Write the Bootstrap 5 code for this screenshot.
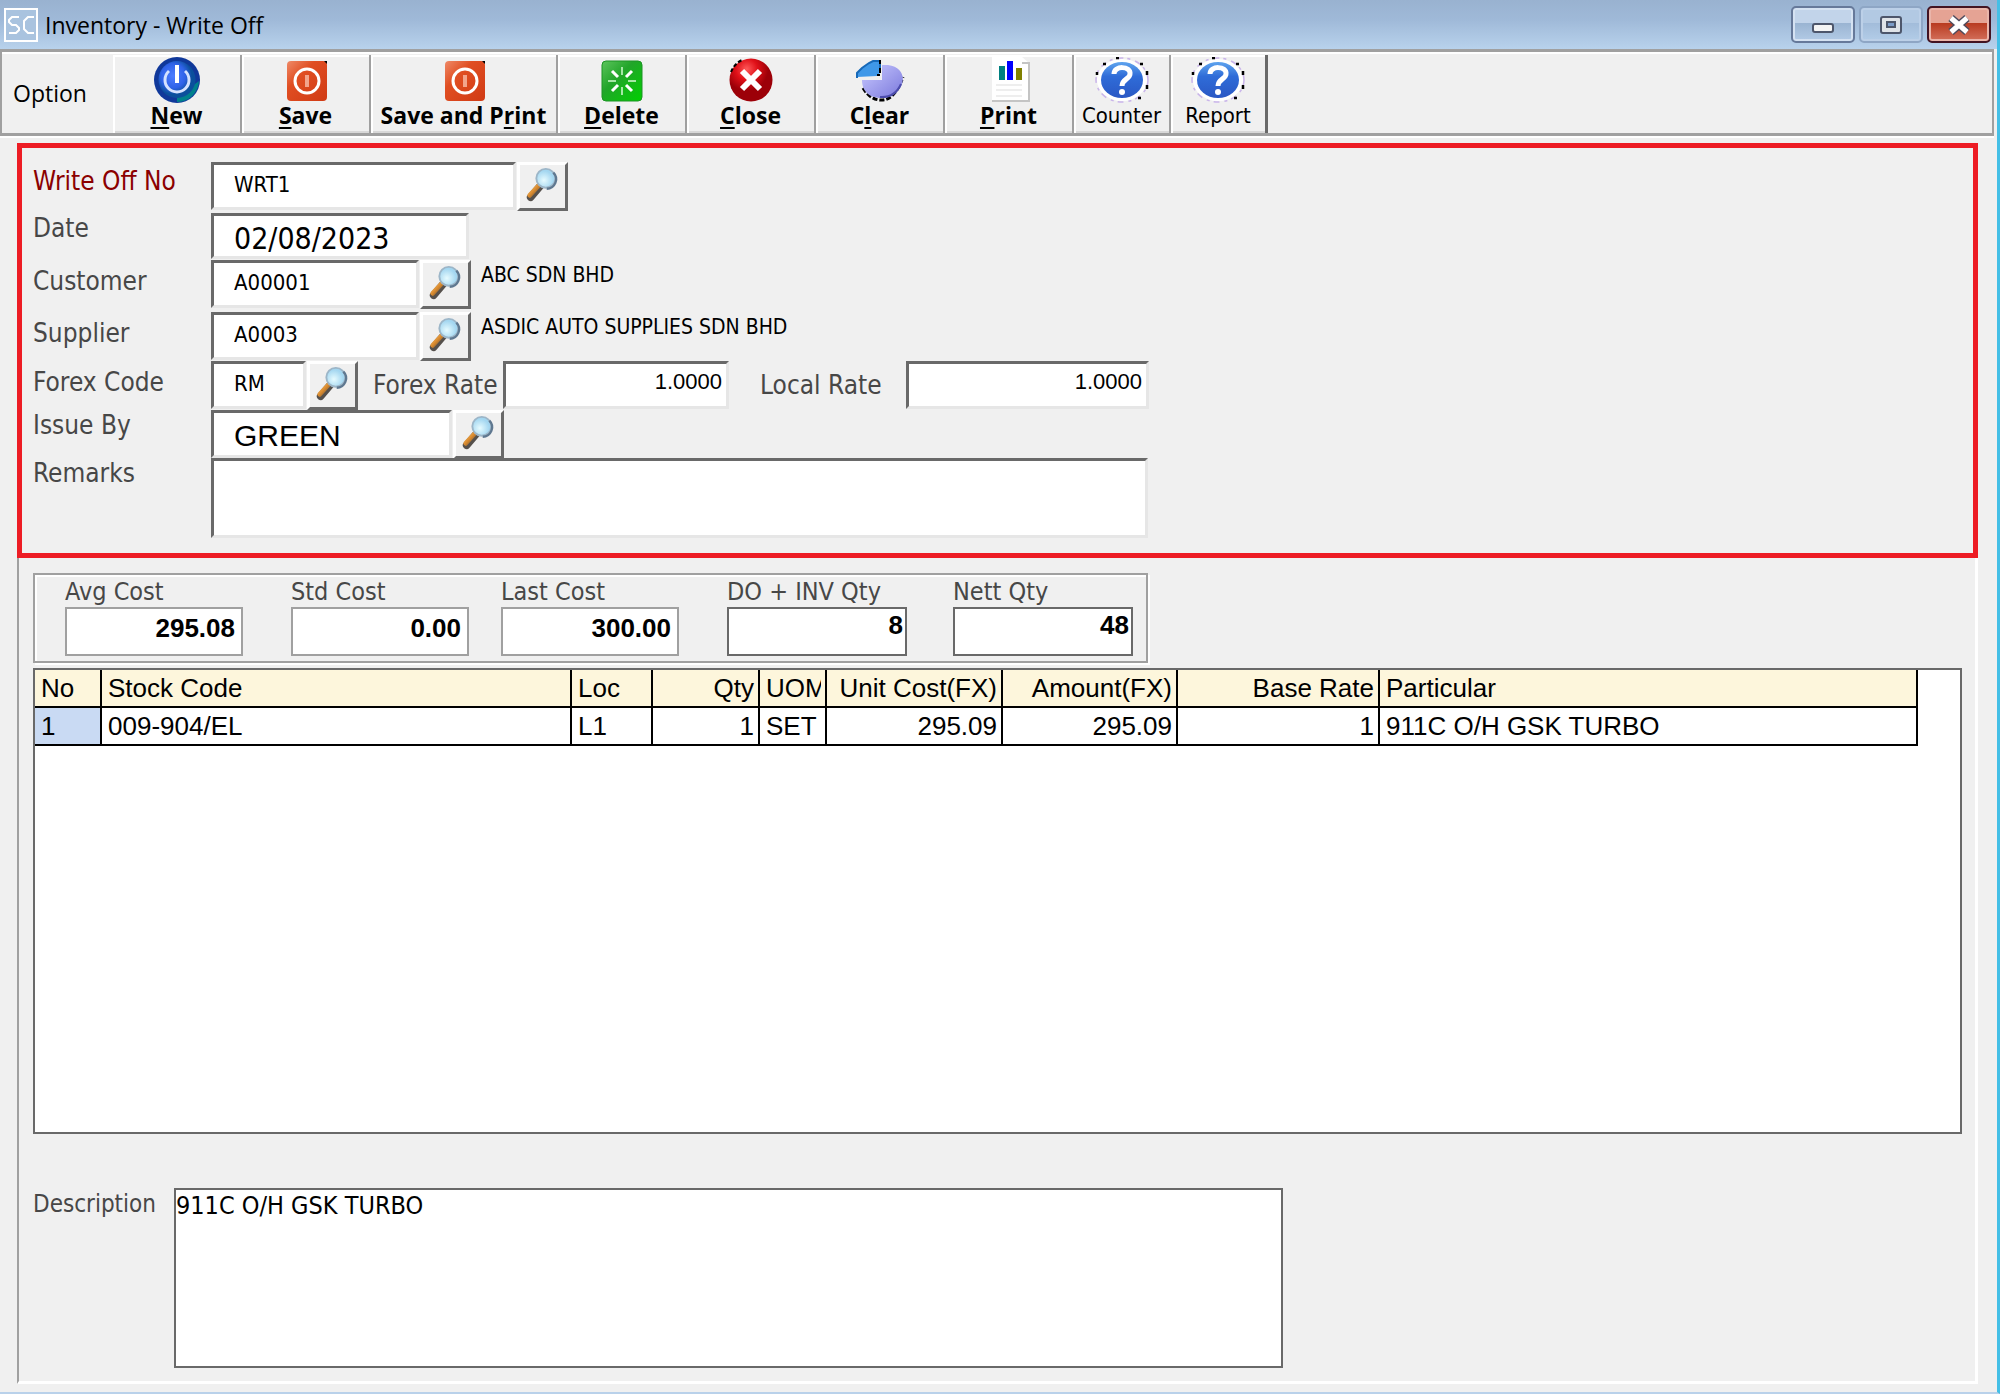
<!DOCTYPE html>
<html lang="en">
<head>
<meta charset="utf-8">
<meta name="viewport" content="width=device-width, initial-scale=1">
<title>Inventory - Write Off</title>
<link href="https://cdn.jsdelivr.net/npm/bootstrap@5.3.0/dist/css/bootstrap.min.css" rel="stylesheet">
<style>
:root { --face: #f0f0f0; --dark: #696969; --mid: #a0a0a0; }
body { font-family: "DejaVu Sans Condensed", "Noto Sans", sans-serif; font-size: 25px; line-height: 30px; color: #000; background: var(--face); }
.app-window { min-height: 100vh; border-right: 3px solid #45bfe6; border-bottom: 2px solid #b9d1ea; background: var(--face); }
.ui-font { font-family: "Open Sans", "Noto Sans", sans-serif; font-size: 23px; }

/* title bar */
.title-bar { height: 49px; padding: 0 6px 0 4px; background: linear-gradient(#99b2d0, #9fb9d8 40%, #b8d2ec); }
.title-bar h1 { font-size: 23px; font-weight: 400; line-height: 30px; margin: 0 0 0 7px; }
.app-logo { width: 34px; height: 34px; }
.win-btn { width: 64px; height: 37px; padding: 0; border: 2px solid #66799a; border-radius: 5px; box-shadow: inset 0 0 0 2px #d5e2f2; background: linear-gradient(#c2d4ea 45%, #9ab4d2 46%, #b3cbe6); display: flex; align-items: center; justify-content: center; }
.win-btn-dim { border-color: #8ea6c5; box-shadow: inset 0 0 0 2px #bcd0e8; background: linear-gradient(#b2c9e3 45%, #a2bcda 46%, #b3cde8); }
.win-btn-close { border-color: #431422; box-shadow: inset 0 0 0 2px #eab5aa; background: linear-gradient(#e5a394 45%, #b83a20 46%, #d4715c); }

/* tool bar */
.tool-bar { height: 87px; margin-right: 3px; border: 3px solid var(--mid); border-width: 3px 2px; box-shadow: inset 0 2px 0 #fff, 0 2px 0 #fff; padding: 3px 0 0 0; }
.tool-title { width: 111px; padding: 23px 0 0 11px; }
.tool-btn { width: 129px; padding: 2px 0 0; border: 0; border-right: 2px solid var(--mid); border-radius: 0; background: var(--face); box-shadow: inset 2px 2px 0 #fff, inset 0 -2px 0 #d8d8d8; font-weight: 700; line-height: 24px; color: #000; display: flex; flex-direction: column; align-items: center; white-space: nowrap; }
.tool-btn svg { width: 54px; height: 46px; flex-shrink: 0; }
.tool-btn u { text-underline-offset: 3px; text-decoration-thickness: 2px; }
.tool-btn-wide { width: 187px; }
.tool-btn-help { width: 97px; font: 400 22px/26px "DejaVu Sans Condensed", "Noto Sans", sans-serif; }
.tool-btn-last { border-right: 3px solid var(--dark); }

/* page panel */
.work-panel { margin: 7px 19px 8px 17px; border: 2px solid var(--mid); border-right: 3px solid #fff; border-bottom: 3px solid #fff; border-top: 0; }
.entry-frame { margin: 0 -3px 0 -2px; border: 5px solid #ed1c24; padding: 14px 11px 15px; }
.cap { color: #474747; white-space: nowrap; }
.entry-row > .cap { font-size: 26px; }
.entry-row > .cap:first-child { width: 178px; }
.entry-row { height: 49px; }
.row-no-key { height: 51px; } .row-date { height: 47px; } .row-cust { height: 52px; } .row-issue { height: 48px; }
.cap-low { padding-top: 6px; }
.entry-row > .cap-rate { width: 130px; margin-left: 15px; padding-top: 9px; }
.entry-row > .cap-local { width: 146px; margin-left: 31px; padding-top: 9px; }
.key-cap { color: #8b0000; }

.field { height: 48px; border: 3px solid; border-color: var(--dark) #e6e6e6 #e6e6e6 var(--dark); border-radius: 0; background: #fff; color: #000; padding: 0 4px 4px 20px; font-size: 22px; line-height: 28px; }
.field-lg { font-size: 30px; padding: 4px 4px 0 20px; line-height: 32px; }
.arial { font-family: "Liberation Sans", Arial, sans-serif; }
.w-key { width: 305px; } .w-date { width: 258px; height: 46px; } .w-code { width: 208px; } .w-cur { width: 95px; }
.w-rate { width: 226px; padding: 0 4px 6px; } .w-local { width: 243px; padding: 0 4px 6px; } .w-issue { width: 241px; }
.remarks { width: 937px; height: 80px; resize: none; }
.find-btn { width: 51px; height: 49px; margin-left: 1px; padding: 1px 2px 0 0; border: 3px solid; border-color: #fff var(--dark) var(--dark) #fff; background: var(--face); display: flex; align-items: flex-start; justify-content: center; }
.find-btn svg { width: 36px; height: 36px; }
.party { font-size: 21px; padding: 0 0 0 10px; white-space: nowrap; }

/* cost figures */
.cost-box { width: 1115px; height: 90px; margin: 15px 0 5px 14px; border: 2px solid var(--mid); box-shadow: inset 2px 2px 0 #fff, 2px 2px 0 #fff; padding: 2px 0 0 30px; }
.cost-item { width: 178px; flex-shrink: 0; }
.gap-a { margin-right: 48px; } .gap-b { margin-right: 32px; }
.cost-item .cap { display: block; }
.cost-val { width: 100%; height: 49px; border: 2px solid var(--mid); border-radius: 0; padding: 0 6px 6px; font-size: 26px; font-weight: 700; color: #000; background: #fff; text-align: right; }
.cost-wide { width: 180px; }
.cost-wide + .cost-wide { margin-left: 46px; }
.cost-val-dark { border-color: var(--dark); padding: 0 2px 13px; }

/* item grid */
.grid-box { margin: 0 13px 0 14px; border: 2px solid var(--dark); background: #fff; min-height: 466px; }
.stock-grid { width: calc(100% - 42px); table-layout: fixed; margin: 0; font-size: 26px; line-height: 34px; border-collapse: separate; border-spacing: 0; }
.stock-grid th, .stock-grid td { height: 38px; padding: 1px 4px 1px 6px; font-weight: 400; border-right: 2px solid #000; border-bottom: 2px solid #000; white-space: nowrap; }
.stock-grid th { background: #fdf6dc; }
.stock-grid .row-no { background: #c9daf3; }

.desc-row { margin: 54px 14px 13px; }
.desc-row .cap { width: 141px; padding-top: 1px; font-size: 24px; }
.desc-text { width: 1109px; height: 180px; border: 2px solid var(--dark); border-radius: 0; padding: 0; font-size: 25px; line-height: 32px; color: #000; background: #fff; resize: none; }
</style>
<script src="https://cdn.jsdelivr.net/npm/bootstrap@5.3.0/dist/js/bootstrap.bundle.min.js"></script>
</head>
<body>
<svg width="0" height="0" class="position-absolute" aria-hidden="true">
  <defs>
    <linearGradient id="gHandle" x1="0" y1="0" x2="1" y2="1"><stop offset="0" stop-color="#ffc56e"/><stop offset=".5" stop-color="#d98a2e"/><stop offset="1" stop-color="#4b4640"/></linearGradient>
    <radialGradient id="gLens" cx=".4" cy=".6"><stop offset="0" stop-color="#e6fbff"/><stop offset="1" stop-color="#a3d6f0"/></radialGradient>
    <radialGradient id="gBlue" cx=".4" cy=".4"><stop offset="0" stop-color="#4d7dff"/><stop offset=".65" stop-color="#2f62e8"/><stop offset="1" stop-color="#0b4f9c"/></radialGradient>
    <linearGradient id="gRedSq" x1="0" y1="0" x2="1" y2="1"><stop offset="0" stop-color="#ef8a68"/><stop offset=".35" stop-color="#e04e22"/><stop offset="1" stop-color="#d03a14"/></linearGradient>
    <linearGradient id="gGreen" x1="0" y1="0" x2="1" y2="1"><stop offset="0" stop-color="#5cc45c"/><stop offset=".4" stop-color="#22a52a"/><stop offset="1" stop-color="#00d000"/></linearGradient>
    <radialGradient id="gRed" cx=".4" cy=".25"><stop offset="0" stop-color="#ff5a5a"/><stop offset=".5" stop-color="#e01018"/><stop offset="1" stop-color="#9c0008"/></radialGradient>
    <linearGradient id="gPie" x1="0" y1="0" x2="1" y2="1"><stop offset="0" stop-color="#c9c9ff"/><stop offset="1" stop-color="#7a78dc"/></linearGradient>
    <linearGradient id="gHelp" x1="0" y1="0" x2="0" y2="1"><stop offset="0" stop-color="#5fa4ee"/><stop offset=".4" stop-color="#2f6cd8"/><stop offset="1" stop-color="#2a58c4"/></linearGradient>
    <symbol id="find" viewBox="0 0 38 38">
      <path d="M18 20 L7 33" stroke="#55504c" stroke-width="8" stroke-linecap="round"/>
      <path d="M17 19 L6 31" stroke="url(#gHandle)" stroke-width="5" stroke-linecap="round"/>
      <circle cx="23" cy="13" r="10" fill="url(#gLens)" stroke="#9db6c8" stroke-width="2"/>
      <path d="M31 7 A10 10 0 0 1 24 24" fill="none" stroke="#5f7890" stroke-width="2.500"/>
    </symbol>
    <symbol id="power" viewBox="0 0 54 46">
      <circle cx="27" cy="23" r="23" fill="#10389a"/><path d="M49 24 A22 22 0 0 1 27 45 L27 40 Z" fill="#00808c"/>
      <circle cx="27" cy="22.500" r="18.500" fill="url(#gBlue)"/>
      <path d="M19 14 A12 12 0 1 0 35 14" fill="none" stroke="#d5e2ff" stroke-width="3"/><path d="M27 8v18" stroke="#fff" stroke-width="4"/>
    </symbol>
    <symbol id="stop" viewBox="0 0 54 46">
      <rect x="8" y="4" width="40" height="40" rx="4" fill="url(#gRedSq)"/><path d="M45 4h3v3z" fill="#000"/>
      <circle cx="28" cy="24" r="12" fill="none" stroke="#fff" stroke-width="3"/><path d="M28 18v12" stroke="#f2a58c" stroke-width="4"/>
    </symbol>
    <symbol id="help" viewBox="0 0 54 46">
      <ellipse cx="27" cy="23" rx="25" ry="21" fill="#fff"/>
      <ellipse cx="27" cy="23" rx="26" ry="22" fill="none" stroke="#c9b4ea" stroke-width="1.500" stroke-dasharray="6 4 3 5"/>
      <path d="M21 1h3M8 7h3M2 15v3M45 7h3M52 14v4M52 28v4M43 41h3" stroke="#000" stroke-width="2.500"/>
      <ellipse cx="27" cy="23" rx="21" ry="18" fill="url(#gHelp)"/>
      <path d="M19 17 C19 8 36 9 35 17 C35 22 27 22 27 29" fill="none" stroke="#fff" stroke-width="5"/><circle cx="27" cy="35" r="3" fill="#fff"/>
    </symbol>
  </defs>
</svg>

<div class="app-window d-flex flex-column">
  <header class="title-bar ui-font d-flex align-items-center">
    <svg class="app-logo" viewBox="0 0 34 34" aria-hidden="true"><rect x="1" y="1" width="32" height="32" fill="#a9c3df" stroke="#fff" stroke-width="2"/><path d="M15 9H8L5 12v2l3 3h4l3 3v2l-3 3H5M30 9h-6l-4 4v8l4 4h6" fill="none" stroke="#fff" stroke-width="2"/></svg>
    <h1>Inventory - Write Off</h1>
    <div class="d-flex gap-1 ms-auto">
      <button type="button" class="win-btn" aria-label="Minimize"><svg width="24" height="24" viewBox="0 0 24 24"><rect x="2" y="11" width="20" height="8" rx="2" fill="#f4f4f4" stroke="#4d566b" stroke-width="2"/></svg></button>
      <button type="button" class="win-btn win-btn-dim" aria-label="Maximize"><svg width="24" height="20" viewBox="0 0 24 20"><rect x="2" y="2" width="20" height="16" rx="2" fill="#dfe3e8" stroke="#4d566b" stroke-width="2"/><rect x="8" y="7" width="8" height="5" fill="#7c9cc8" stroke="#4d566b" stroke-width="2"/></svg></button>
      <button type="button" class="win-btn win-btn-close" aria-label="Close window"><svg width="26" height="20" viewBox="0 0 26 20"><path d="M5 3l16 14M21 3L5 17" stroke="#4d4a5c" stroke-width="8"/><path d="M5 3l16 14M21 3L5 17" stroke="#fff" stroke-width="5"/></svg></button>
    </div>
  </header>

  <nav class="tool-bar ui-font d-flex" aria-label="Option">
    <div class="tool-title">Option</div>
    <button type="button" class="tool-btn"><svg><use href="#power"/></svg><span><u>N</u>ew</span></button>
    <button type="button" class="tool-btn"><svg><use href="#stop"/></svg><span><u>S</u>ave</span></button>
    <button type="button" class="tool-btn tool-btn-wide"><svg><use href="#stop"/></svg><span>Save and P<u>r</u>int</span></button>
    <button type="button" class="tool-btn"><svg viewBox="0 0 54 46"><rect x="7" y="4" width="40" height="40" rx="4" fill="url(#gGreen)" stroke="#1c9424"/><path d="M27 10v8M27 30v8M13 24h8M33 24h8" stroke="#a6e8a6" stroke-width="2"/><path d="M17 14l6 6M31 28l6 6M37 14l-6 6M23 28l-6 6" stroke="#fff" stroke-width="3"/></svg><span><u>D</u>elete</span></button>
    <button type="button" class="tool-btn"><svg viewBox="0 0 54 46"><circle cx="27" cy="23" r="21.500" fill="url(#gRed)"/><path d="M7 15A21.500 21.500 0 0 1 18 3" fill="none" stroke="#000" stroke-width="2" stroke-dasharray="4 2"/><path d="M18 14l18 18M36 14L18 32" stroke="#fff" stroke-width="6"/></svg><span><u>C</u>lose</span></button>
    <button type="button" class="tool-btn"><svg viewBox="0 0 54 46"><path d="M10 31Q18 44 30 43T50 20" fill="none" stroke="#000" stroke-width="3" stroke-dasharray="5 2"/><path d="M9 23H29V8H35C58 11 53 38 29 41C14 41 9 32 9 23Z" fill="url(#gPie)"/><path d="M48 27Q42 41 27 40" fill="none" stroke="#4c4cac" stroke-width="2"/><path d="M4 20V16L9 11L16 6L20 4H27V16L24 19Z" fill="#3f98e8"/><path d="M4 21V16L9 11L16 6L20 4H27V16" fill="none" stroke="#1769b8" stroke-width="2"/><path d="M27 3v4M27 11v5M24 18h3" stroke="#000" stroke-width="2"/></svg><span>C<u>l</u>ear</span></button>
    <button type="button" class="tool-btn"><svg viewBox="0 0 54 46"><path d="M10 0h30l7 6v38H10z" fill="#fff"/><path d="M40 6h7v38H10" fill="none" stroke="#c4c4c4" stroke-width="2"/><path d="M17 9h6v14h-6z" fill="#008080"/><path d="M25 4h6v19h-6z" fill="#00f"/><path d="M34 11h6v12h-6z" fill="#808000"/><path d="M14 28h26M14 33h26M14 39h26" stroke="#ddd"/></svg><span><u>P</u>rint</span></button>
    <button type="button" class="tool-btn tool-btn-help"><svg><use href="#help"/></svg><span>Counter</span></button>
    <button type="button" class="tool-btn tool-btn-help tool-btn-last"><svg><use href="#help"/></svg><span>Report</span></button>
  </nav>

  <main class="work-panel d-flex flex-column flex-grow-1">
    <form class="entry-frame">
      <div class="entry-row row-no-key d-flex">
        <label class="cap key-cap pt-1" for="no">Write Off No</label>
        <input id="no" class="field w-key" value="WRT1">
        <button type="button" class="find-btn" aria-label="Find write off"><svg><use href="#find"/></svg></button>
      </div>
      <div class="entry-row row-date d-flex">
        <label class="cap" for="date">Date</label>
        <input id="date" class="field field-lg w-date" value="02/08/2023">
      </div>
      <div class="entry-row row-cust d-flex">
        <label class="cap cap-low" for="cust">Customer</label>
        <input id="cust" class="field w-code" value="A00001">
        <button type="button" class="find-btn" aria-label="Find customer"><svg><use href="#find"/></svg></button>
        <span class="party">ABC SDN BHD</span>
      </div>
      <div class="entry-row d-flex">
        <label class="cap cap-low" for="supp">Supplier</label>
        <input id="supp" class="field w-code" value="A0003">
        <button type="button" class="find-btn" aria-label="Find supplier"><svg><use href="#find"/></svg></button>
        <span class="party">ASDIC AUTO SUPPLIES SDN BHD</span>
      </div>
      <div class="entry-row d-flex">
        <label class="cap cap-low" for="cur">Forex Code</label>
        <input id="cur" class="field w-cur" value="RM">
        <button type="button" class="find-btn" aria-label="Find currency"><svg><use href="#find"/></svg></button>
        <label class="cap cap-rate" for="frate">Forex Rate</label>
        <input id="frate" class="field arial w-rate text-end" value="1.0000">
        <label class="cap cap-local" for="lrate">Local Rate</label>
        <input id="lrate" class="field arial w-local text-end" value="1.0000">
      </div>
      <div class="entry-row row-issue d-flex">
        <label class="cap" for="issue">Issue By</label>
        <input id="issue" class="field field-lg arial w-issue" value="GREEN">
        <button type="button" class="find-btn" aria-label="Find issuer"><svg><use href="#find"/></svg></button>
      </div>
      <div class="entry-row h-auto d-flex">
        <label class="cap" for="rem">Remarks</label>
        <textarea id="rem" class="field remarks"></textarea>
      </div>
    </form>

    <section class="cost-box d-flex">
      <div class="cost-item gap-a"><label class="cap" for="avg">Avg Cost</label><input id="avg" class="cost-val arial" value="295.08"></div>
      <div class="cost-item gap-b"><label class="cap" for="std">Std Cost</label><input id="std" class="cost-val arial" value="0.00"></div>
      <div class="cost-item gap-a"><label class="cap" for="last">Last Cost</label><input id="last" class="cost-val arial" value="300.00"></div>
      <div class="cost-item cost-wide"><label class="cap" for="doq">DO + INV Qty</label><input id="doq" class="cost-val cost-val-dark arial" value="8"></div>
      <div class="cost-item cost-wide"><label class="cap" for="nett">Nett Qty</label><input id="nett" class="cost-val cost-val-dark arial" value="48"></div>
    </section>

    <section class="grid-box flex-grow-1">
      <table class="stock-grid arial">
        <colgroup><col style="width:67px"><col style="width:470px"><col style="width:81px"><col style="width:107px"><col style="width:67px"><col style="width:176px"><col style="width:175px"><col style="width:202px"><col></colgroup>
        <thead><tr><th>No</th><th>Stock Code</th><th>Loc</th><th class="text-end">Qty</th><th><div class="overflow-hidden">UOM</div></th><th class="text-end">Unit Cost(FX)</th><th class="text-end">Amount(FX)</th><th class="text-end">Base Rate</th><th>Particular</th></tr></thead>
        <tbody><tr><td class="row-no">1</td><td>009-904/EL</td><td>L1</td><td class="text-end">1</td><td>SET</td><td class="text-end">295.09</td><td class="text-end">295.09</td><td class="text-end">1</td><td>911C O/H GSK TURBO</td></tr></tbody>
      </table>
    </section>

    <section class="desc-row d-flex">
      <label class="cap" for="desc">Description</label>
      <textarea id="desc" class="desc-text">911C O/H GSK TURBO</textarea>
    </section>
  </main>
</div>
</body>
</html>
